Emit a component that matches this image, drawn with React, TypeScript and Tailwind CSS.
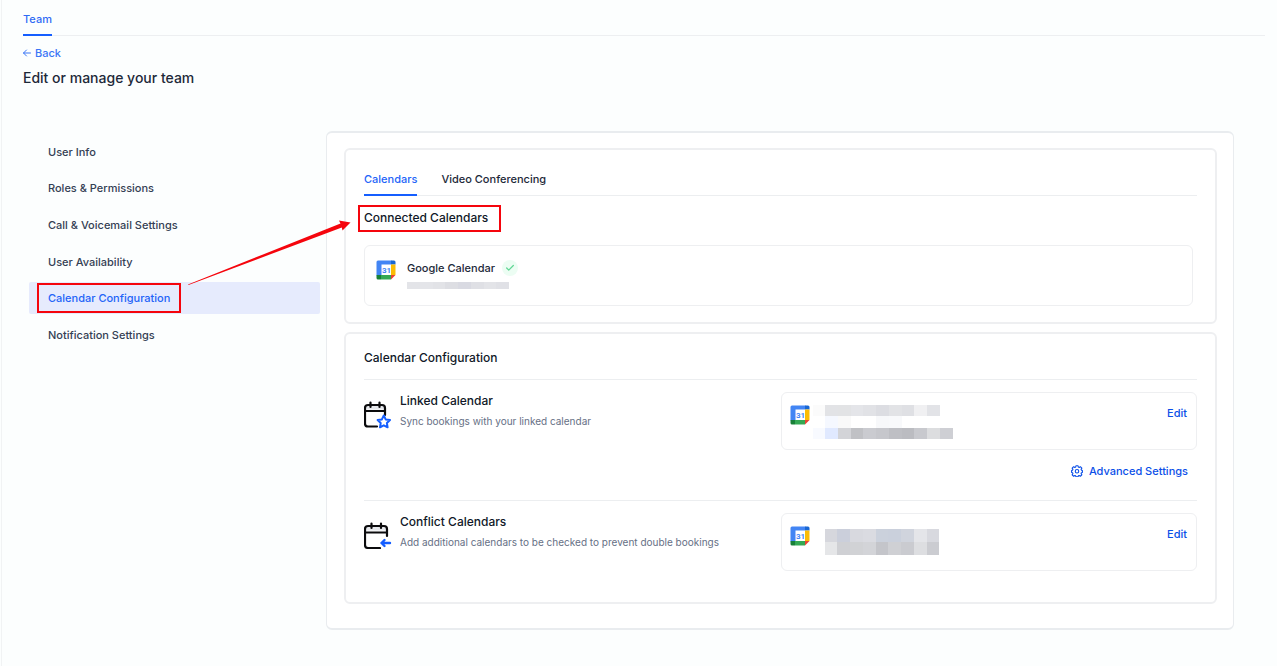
import { useState } from 'react';
import { Check } from 'lucide-react';
import clsx from 'clsx';

const menuItems = [
  'User Info',
  'Roles & Permissions',
  'Call & Voicemail Settings',
  'User Availability',
  'Calendar Configuration',
  'Notification Settings',
];

const tabs = ['Calendars', 'Video Conferencing'];

// Redacted text, one colour per block
const accountBlocks = [
  'bg-[#e3e4e8]', 'bg-[#e4e5e9]', 'bg-[#e2e3e7]', 'bg-[#dddee3]', 'bg-[#d9dae2]', 'bg-[#dfe0e5]', 'bg-[#e3e4e8]', 'bg-[#e0e1e6]',
];

const linkedRows = [
  [
    'bg-[#fbfbfb]', 'bg-[#e2e3e6]', 'bg-[#e2e3e5]', 'bg-[#e4e5e9]', 'bg-[#e1e2e6]', 'bg-[#dcdde2]',
    'bg-[#e2e3e6]', 'bg-[#dfe0e4]', 'bg-[#f0f0f2]', 'bg-[#e2e3e7]', 'bg-white',
  ],
  [
    'bg-white', 'bg-[#f5f8ff]', 'bg-[#f9f9f9]', 'bg-white', 'bg-white', 'bg-[#f7f8fa]',
    'bg-[#f8f9fb]', 'bg-white', 'bg-white', 'bg-white', 'bg-white',
  ],
  [
    'bg-[#f8faff]', 'bg-[#e0e9ff]', 'bg-[#d3d4d8]', 'bg-[#c0c1c5]', 'bg-[#cacbd0]', 'bg-[#c6c7cc]',
    'bg-[#bebfc4]', 'bg-[#bbbcc1]', 'bg-[#c8c9ce]', 'bg-[#dcdddf]', 'bg-[#cecfd4]',
  ],
];

const conflictRows = [
  [
    'bg-[#d6d7dd]', 'bg-[#cbcfdb]', 'bg-[#d8d9df]', 'bg-[#dadbe1]', 'bg-[#cbd1dc]',
    'bg-[#cad0dc]', 'bg-[#d0d4dd]', 'bg-[#e4e5e9]', 'bg-[#d8d9df]',
  ],
  [
    'bg-[#e5e6e8]', 'bg-[#cfd0d4]', 'bg-[#d1d2d5]', 'bg-[#d3d4d8]', 'bg-[#c4c5ca]',
    'bg-[#cfd0d4]', 'bg-[#cacbd0]', 'bg-[#dddee1]', 'bg-[#cbccd1]',
  ],
];

function GoogleCalendarIcon() {
  return (
    <svg className="h-5 w-5 shrink-0" viewBox="0 0 20 20" aria-hidden="true">
      <rect x="4" y="4" width="12" height="12" fill="#fff" />
      <path d="M2 .5h13.500v4h-10v11h-5V2A1.500 1.500 0 0 1 2 .5z" fill="#4285f4" />
      <path d="M15 .5h3A1.500 1.500 0 0 1 19.500 2v2.500H15z" fill="#1967d2" />
      <path d="M15 4.500h4.500V15H15z" fill="#fbbc04" />
      <path d="M5 15h10v4.500H5z" fill="#34a853" />
      <path d="M.5 15H5v4.500H2A1.500 1.500 0 0 1 .5 18z" fill="#188038" />
      <path d="M15 15h4.500L15 19.500z" fill="#ea4335" />
      <text
        x="10.500"
        y="13"
        textAnchor="middle"
        fontSize="8"
        fontWeight="700"
        fontFamily="Roboto, sans-serif"
        fill="#4285f4"
      >
        31
      </text>
    </svg>
  );
}

function LinkedIcon() {
  return (
    <svg className="h-7 w-7 shrink-0" viewBox="0 0 28 28" fill="none" strokeLinecap="round" strokeLinejoin="round" aria-hidden="true">
      <path d="M1 8.500h20V7a3 3 0 0 0-3-3H4a3 3 0 0 0-3 3z" fill="#e5e7eb" />
      <path
        d="M13 25.500H4A3 3 0 0 1 1 22.500V7a3 3 0 0 1 3-3h14a3 3 0 0 1 3 3v7M1 10H21M6.500 1.500V6M15.500 1.500V6"
        stroke="#0b0b0d"
        strokeWidth="2.200"
      />
      <path
        d="M19.800 14.500l1.900 3.900 4.300.6-3.100 3 .7 4.300-3.800-2-3.800 2 .7-4.300-3.100-3 4.300-.6z"
        fill="#fff"
        stroke="#155eff"
        strokeWidth="2"
      />
    </svg>
  );
}

function ConflictIcon() {
  return (
    <svg className="h-7 w-7 shrink-0" viewBox="0 0 28 28" fill="none" strokeLinecap="round" strokeLinejoin="round" aria-hidden="true">
      <path d="M1 9.500h22V8a3 3 0 0 0-3-3H4a3 3 0 0 0-3 3z" fill="#e5e7eb" />
      <path
        d="M16 27H4a3 3 0 0 1-3-3V8a3 3 0 0 1 3-3h16a3 3 0 0 1 3 3v7M1 11.500H23M7.500 2.500V7M17 2.500V7"
        stroke="#0b0b0d"
        strokeWidth="2.200"
      />
      <path d="M26 22h-8.500M20.500 19l-3 3 3 3" stroke="#155eff" strokeWidth="2.400" />
    </svg>
  );
}

function GearIcon() {
  return (
    <svg className="h-3 w-3" viewBox="0 0 24 24" fill="none" stroke="currentColor" strokeWidth="2.200" strokeLinejoin="round" aria-hidden="true">
      <path d="M9.900 1.500h4.200l.6 2.700 1.600.7 2.400-1.500 3 3-1.500 2.400.6 1.500 2 .6v4l-2 .6-.6 1.600 1.500 2.400-3 3-2.400-1.500-1.600.7-.6 1.800H9.900l-.6-1.800-1.600-.7-2.400 1.500-3-3 1.500-2.400-.6-1.600-2-.6v-4l2-.6.6-1.500-1.500-2.400 3-3 2.400 1.500 1.600-.7z" />
      <circle cx="12" cy="12.500" r="3.500" />
    </svg>
  );
}

interface CalendarBoxProps {
  rows: string[][];
  gridClass: string;
}

function CalendarBox({ rows, gridClass }: CalendarBoxProps) {
  return (
    <div className="flex h-[58px] items-start rounded-md border border-[#eeeff1] px-2 pt-3">
      <GoogleCalendarIcon />
      <div className={clsx('grid', gridClass)}>
        {rows.flat().map((color, index) => (
          <span key={index} className={color} />
        ))}
      </div>
      <button type="button" className="ml-auto pr-px text-[11px] leading-4 font-medium text-[#0b4fe8]">
        Edit
      </button>
    </div>
  );
}

export default function App() {
  const [activeItem, setActiveItem] = useState('Calendar Configuration');
  const [activeTab, setActiveTab] = useState('Calendars');

  return (
    <div className="relative min-h-screen bg-[#fcfefe] pl-px font-['Inter',sans-serif] text-[11px] text-[#1d2939]">
      <div className="min-h-screen border-l border-[#f1f3f4]">
        <header className="mr-3 ml-[21px]">
          <div className="flex border-b border-[#edeff1]">
            <button type="button" className="-mb-px h-9 border-b-2 border-[#155eff] pt-1 text-[11px] font-medium text-[#2f6bf5]">
              Team
            </button>
          </div>
          <a href="#team" className="mt-[9px] flex w-fit items-center gap-1 leading-4 font-medium text-[#3b76f6]">
            <svg className="h-2 w-2" viewBox="0 0 8 8" fill="none" stroke="currentColor" strokeLinecap="round" strokeLinejoin="round" aria-hidden="true">
              <path d="M7.500 4H.5M3.500 1l-3 3 3 3" />
            </svg>
            Back
          </a>
          <h1 className="mt-[7px] text-sm leading-5 font-medium">Edit or manage your team</h1>
        </header>

        <div className="mt-[43px] mr-[43px] mb-9 ml-[27px] flex items-start gap-[6px]">
          <nav className="mt-[5px] flex h-[215px] w-[291px] shrink-0 flex-col justify-between">
            {menuItems.map((item) => (
              <button
                key={item}
                type="button"
                onClick={() => setActiveItem(item)}
                className={clsx(
                  'h-8 rounded-xs px-[19px] text-left font-medium',
                  activeItem === item ? 'bg-[#e6ebfd] text-[#2364f8]' : 'text-[#344054]',
                )}
              >
                <span className="relative">
                  {item}
                  {item === 'Calendar Configuration' && (
                    <span className="pointer-events-none absolute -inset-x-[11px] -inset-y-2 border-2 border-[#f5050d]" />
                  )}
                </span>
              </button>
            ))}
          </nav>

          <main className="min-w-0 flex-1 space-y-2 rounded-md border border-t-2 border-b-2 border-[#e9ecef] bg-white pt-[15px] pr-4 pb-6 pl-[17px]">
            <section className="rounded-md border-2 border-[#eeeff1] px-[18px] pt-[15px] pb-4">
              <div role="tablist" className="flex gap-6 border-b border-[#eceef0]">
                {tabs.map((tab) => (
                  <button
                    key={tab}
                    type="button"
                    role="tab"
                    aria-selected={activeTab === tab}
                    onClick={() => setActiveTab(tab)}
                    className={clsx(
                      '-mb-px h-[31px] border-b-2 font-medium',
                      activeTab === tab ? 'border-[#155eff] text-[#2364f8]' : 'border-transparent text-[#1d2939]',
                    )}
                  >
                    {tab}
                  </button>
                ))}
              </div>
              <h2 className="mt-3 text-xs leading-5 font-medium text-[#101828]">
                <span className="relative">
                  Connected Calendars
                  <span className="pointer-events-none absolute -top-[5px] -right-[13px] -bottom-[7px] -left-[6px] border-2 border-[#f5050d]" />
                </span>
              </h2>
              <div className="mt-[17px] mr-1 flex h-[61px] items-start rounded-md border border-[#eeeff1] px-[11px] pt-[14px]">
                <GoogleCalendarIcon />
                <div className="ml-[11px]">
                  <div className="flex items-center gap-[7px]">
                    <p className="leading-4 font-medium">Google Calendar</p>
                    <span className="flex h-4 w-4 items-center justify-center rounded-full bg-[#ecfdf3] text-[#5fd694]">
                      <Check className="h-[10px] w-[10px]" strokeWidth={3} />
                    </span>
                  </div>
                  <div className="mt-[6px] grid h-[7px] w-[102px] grid-cols-8">
                    {accountBlocks.map((color, index) => (
                      <span key={index} className={color} />
                    ))}
                  </div>
                </div>
              </div>
            </section>

            <section className="rounded-md border-2 border-[#eeeff1] px-[18px] pt-[14px] pb-[31px]">
              <h2 className="border-b border-[#eceef0] pb-[11px] text-xs leading-5 font-medium text-[#101828]">
                Calendar Configuration
              </h2>
              <div className="grid grid-cols-2 border-b border-[#eceef0] pt-3 pb-[21px]">
                <div className="flex items-start gap-2 pt-[9px]">
                  <LinkedIcon />
                  <div className="-mt-[10px]">
                    <h3 className="text-xs leading-5 font-medium text-[#101828]">Linked Calendar</h3>
                    <p className="text-[10px] leading-5 text-[#667085]">Sync bookings with your linked calendar</p>
                  </div>
                </div>
                <div>
                  <CalendarBox rows={linkedRows} gridClass="ml-[3px] h-[34px] w-[140px] grid-cols-11" />
                  <button
                    type="button"
                    className="mt-[13px] mr-[9px] ml-auto flex items-center gap-[6px] leading-4 font-medium text-[#0b4fe8]"
                  >
                    <GearIcon />
                    Advanced Settings
                  </button>
                </div>
              </div>
              <div className="grid grid-cols-2 pt-3">
                <div className="flex items-start gap-2 pt-2">
                  <ConflictIcon />
                  <div className="-mt-[9px]">
                    <h3 className="text-xs leading-5 font-medium text-[#101828]">Conflict Calendars</h3>
                    <p className="text-[10px] leading-5 text-[#667085]">
                      Add additional calendars to be checked to prevent double bookings
                    </p>
                  </div>
                </div>
                <CalendarBox rows={conflictRows} gridClass="ml-[15px] mt-[3px] h-[26px] w-[115px] grid-cols-9" />
              </div>
            </section>
          </main>
        </div>
      </div>

      {/* Arrow from the menu entry to the section heading */}
      <svg className="pointer-events-none absolute top-[216px] left-[184px] h-[72px] w-[170px]" viewBox="0 0 170 72" aria-hidden="true">
        <path d="M4 68.500L156.500 7.500 155 4.500 166.500 6.500 158.500 14.500 157.800 11.500 4.500 69z" fill="#f5050d" />
      </svg>
    </div>
  );
}
